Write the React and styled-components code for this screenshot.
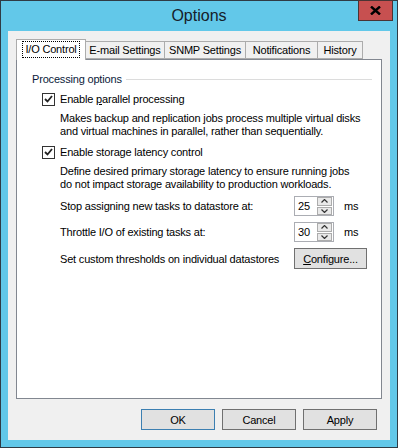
import React from 'react';
import styled, { createGlobalStyle } from 'styled-components';

const GlobalStyle = createGlobalStyle`
  html, body {
    margin: 0;
    padding: 0;
    background: #ffffff;
  }
  body {
    font-family: "Liberation Sans", Arial, sans-serif;
    font-size: 11px;
    letter-spacing: -0.18px;
    color: #000000;
  }
`;

const Frame = styled.div`
  width: 398px;
  height: 448px;
  box-sizing: border-box;
  border: 1px solid #2f3b45;
  background: #62c8e9;
  display: flex;
  flex-direction: column;
`;

const TitleBar = styled.div`
  height: 30px;
  display: grid;
  grid-template-columns: 1fr auto 1fr;
  align-items: start;
`;

const Title = styled.div`
  grid-column: 2;
  font-size: 16px;
  letter-spacing: 0;
  line-height: 30px;
  color: #16202a;
`;

const CloseButton = styled.div`
  grid-column: 3;
  justify-self: end;
  margin-top: -1px;
  margin-right: 4px;
  width: 33px;
  height: 19px;
  background: #c75050;
  border: 1px solid #4a3434;
  display: flex;
  align-items: center;
  justify-content: center;
`;

const Client = styled.div`
  flex: 1;
  margin: 0 7px 7px;
  background: #f0f0f0;
  padding: 8px 8px 0;
  display: flex;
  flex-direction: column;
`;

const TabStrip = styled.div`
  display: flex;
  align-items: flex-end;
  height: 20px;
  position: relative;
  z-index: 1;
`;

const Tab = styled.div`
  box-sizing: border-box;
  width: ${({ w }) => w}px;
  height: ${({ active }) => (active ? 21 : 18)}px;
  margin-left: ${({ first }) => (first ? 0 : -1)}px;
  margin-bottom: ${({ active }) => (active ? -1 : 0)}px;
  border: 1px solid #acacac;
  border-bottom: ${({ active }) => (active ? 'none' : '1px solid #acacac')};
  background: ${({ active }) => (active ? '#ffffff' : '#f0f0f0')};
  display: flex;
  align-items: center;
  justify-content: center;
  padding-bottom: ${({ active }) => (active ? 2 : 0)}px;
  white-space: nowrap;
`;

const FocusLabel = styled.span`
  outline: 1px dotted #000000;
  outline-offset: 1px;
  padding: 0 1px;
  line-height: 13px;
`;

const Panel = styled.div`
  box-sizing: border-box;
  height: 340px;
  background: #ffffff;
  border: 1px solid #828790;
  padding: 12px 9px 0 15px;
  display: flex;
  flex-direction: column;
`;

const GroupHeader = styled.div`
  display: flex;
  align-items: center;
  gap: 4px;
  height: 14px;
  color: #0a1a3a;
  &::after {
    content: '';
    flex: 1;
    height: 1px;
    background: #dcdcdc;
  }
`;

const GroupBody = styled.div`
  padding-left: 10px;
  display: flex;
  flex-direction: column;
`;

const CheckRow = styled.label`
  display: flex;
  align-items: center;
  gap: 5px;
  height: 14px;
  margin-top: ${({ top }) => top}px;
`;

const Box = styled.span`
  box-sizing: border-box;
  width: 13px;
  height: 13px;
  border: 1px solid #333333;
  background: #ffffff;
  display: flex;
  align-items: center;
  justify-content: center;
`;

const Hot = styled.span`
  text-decoration: underline;
`;

const Description = styled.div`
  margin-top: 6px;
  padding-left: 18px;
  line-height: 13px;
`;

const SettingsGrid = styled.div`
  display: grid;
  grid-template-columns: 234px 40px auto;
  justify-content: start;
  align-items: center;
  row-gap: 6px;
  padding-left: 18px;
  margin-top: 5px;
`;

const SettingLabel = styled.div`
  line-height: 14px;
`;

const Spinner = styled.div`
  box-sizing: border-box;
  width: 40px;
  height: 20px;
  border: 1px solid #abadb3;
  display: flex;
  background: #ffffff;
`;

const SpinValue = styled.div`
  flex: 1;
  padding-left: 3px;
  line-height: 18px;
`;

const SpinButtons = styled.div`
  width: 15px;
  display: flex;
  flex-direction: column;
  gap: 1px;
  padding: 0 1px 0 0;
`;

const SpinButton = styled.div`
  flex: 1;
  box-sizing: border-box;
  border: 1px solid #acacac;
  background: #e9e9e9;
  display: flex;
  align-items: center;
  justify-content: center;
`;

const Unit = styled.div`
  padding-left: 10px;
`;

const Button = styled.div`
  box-sizing: border-box;
  width: ${({ w }) => w || 74}px;
  height: 21px;
  border: 1px solid ${({ primary }) => (primary ? '#3c7fb1' : '#707070')};
  background: #e1e1e1;
  display: flex;
  align-items: center;
  justify-content: center;
`;

const Footer = styled.div`
  display: flex;
  justify-content: flex-end;
  gap: 7px;
  padding: 10px 5px 0 0;
`;

const tabs = [
  { label: 'I/O Control', w: 70, active: true },
  { label: 'E-mail Settings', w: 80 },
  { label: 'SNMP Settings', w: 82 },
  { label: 'Notifications', w: 73 },
  { label: 'History', w: 46 },
];

const Check = () => (
  <Box>
    <svg width="9" height="8" viewBox="0 0 9 8">
      <path d="M1 4 L3.5 6.5 L8 1" fill="none" stroke="#222" strokeWidth="1.8" />
    </svg>
  </Box>
);

const Chevron = ({ up }) => (
  <svg width="7" height="4" viewBox="0 0 7 4">
    <path
      d={up ? 'M0.5 3.5 L3.5 0.5 L6.5 3.5' : 'M0.5 0.5 L3.5 3.5 L6.5 0.5'}
      fill="none"
      stroke="#333"
      strokeWidth="1.2"
    />
  </svg>
);

const NumberBox = ({ value }) => (
  <Spinner>
    <SpinValue>{value}</SpinValue>
    <SpinButtons>
      <SpinButton>
        <Chevron up />
      </SpinButton>
      <SpinButton>
        <Chevron />
      </SpinButton>
    </SpinButtons>
  </Spinner>
);

const App = () => (
  <>
    <GlobalStyle />
    <Frame>
      <TitleBar>
        <Title>Options</Title>
        <CloseButton>
          <svg width="11" height="9" viewBox="0 0 11 9">
            <path d="M1 0.5 L10 8.5 M10 0.5 L1 8.5" stroke="#000" strokeWidth="2.4" />
          </svg>
        </CloseButton>
      </TitleBar>
      <Client>
        <TabStrip>
          {tabs.map((t, i) => (
            <Tab key={t.label} w={t.w} active={t.active} first={i === 0}>
              {t.active ? <FocusLabel>{t.label}</FocusLabel> : t.label}
            </Tab>
          ))}
        </TabStrip>
        <Panel>
          <GroupHeader>Processing options</GroupHeader>
          <GroupBody>
            <CheckRow top={6}>
              <Check />
              <span>
                Enable <Hot>p</Hot>arallel processing
              </span>
            </CheckRow>
            <Description>
              Makes backup and replication jobs process multiple virtual disks
              <br />
              and virtual machines in parallel, rather than sequentially.
            </Description>
            <CheckRow top={7}>
              <Check />
              <span>Enable storage latency control</span>
            </CheckRow>
            <Description>
              Define desired primary storage latency to ensure running jobs
              <br />
              do not impact storage availability to production workloads.
            </Description>
            <SettingsGrid>
              <SettingLabel>Stop assigning new tasks to datastore at:</SettingLabel>
              <NumberBox value="25" />
              <Unit>ms</Unit>
              <SettingLabel>Throttle I/O of existing tasks at:</SettingLabel>
              <NumberBox value="30" />
              <Unit>ms</Unit>
              <SettingLabel>Set custom thresholds on individual datastores</SettingLabel>
              <Button w={73}>
                <span>
                  <Hot>C</Hot>onfigure...
                </span>
              </Button>
            </SettingsGrid>
          </GroupBody>
        </Panel>
        <Footer>
          <Button primary>OK</Button>
          <Button>Cancel</Button>
          <Button>Apply</Button>
        </Footer>
      </Client>
    </Frame>
  </>
);

export default App;
